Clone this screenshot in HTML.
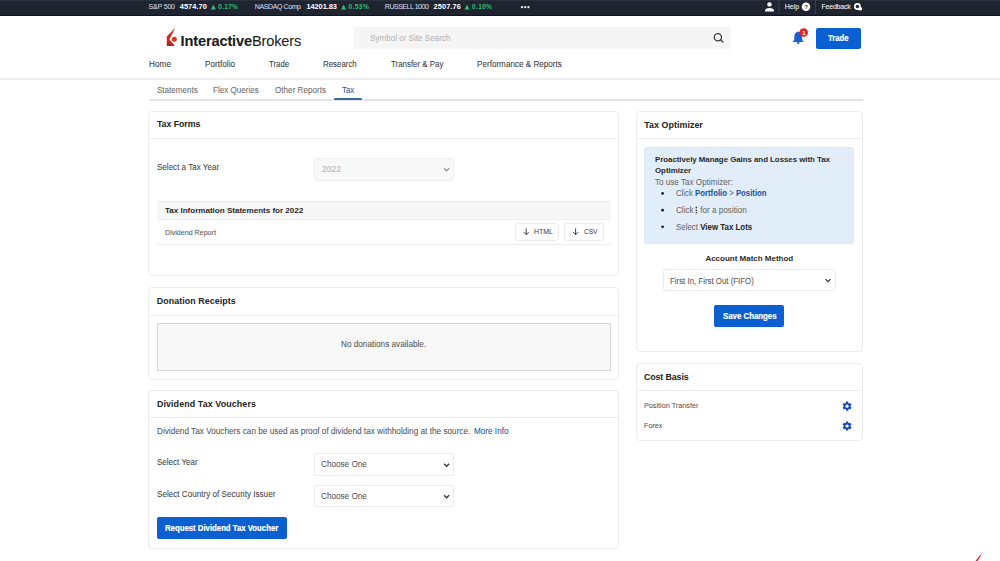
<!DOCTYPE html>
<html><head><meta charset="utf-8">
<style>
html,body{margin:0;padding:0;width:1000px;height:561px;overflow:hidden;background:#fff;position:relative;font-family:"Liberation Sans",sans-serif}
.t{position:absolute;white-space:pre;-webkit-text-stroke:0.06px currentColor}
.b{position:absolute;box-sizing:border-box}
.card{position:absolute;box-sizing:border-box;border:1px solid #ebebeb;border-radius:4px;background:#fff}
.hl{position:absolute;height:1px;background:#ececec}
.sel{position:absolute;box-sizing:border-box;border:1px solid #eaeaea;border-radius:3px;background:#fff}
.btn{position:absolute;box-sizing:border-box;background:#0a60d0;border-radius:2px}
svg{position:absolute;overflow:visible}
</style></head><body>
<!-- top bar -->
<div class="b" style="left:0;top:0;width:1000px;height:16px;background:#1f2431"></div>
<div class="b" style="left:0;top:0;width:1000px;height:1px;background:#2a2f3c"></div>
<div class="b" style="left:0;top:15px;width:1000px;height:1px;background:#10141c"></div>
<svg style="left:0;top:0" width="1000" height="16">
 <g fill="#2fbf71">
  <polygon points="210.8,9.4 213.3,4.4 215.8,9.4"/>
  <polygon points="341.2,9.4 343.6,4.4 346,9.4"/>
  <polygon points="464.6,9.4 467,4.4 469.4,9.4"/>
 </g>
 <g fill="#fff">
  <circle cx="522" cy="7.2" r="1.1"/><circle cx="525.2" cy="7.2" r="1.1"/><circle cx="528.4" cy="7.2" r="1.1"/>
  <circle cx="769.5" cy="4.4" r="2.2"/>
  <path d="M765,11.4 L765,10.6 C765,8.9 766.8,7.9 769.5,7.9 C772.2,7.9 774,8.9 774,10.6 L774,11.4 Z"/>
  <circle cx="806" cy="6.8" r="4.3"/>
  <circle cx="857.4" cy="6.5" r="3.4"/>
  <circle cx="860.2" cy="8.7" r="1.9"/>
 </g>
 <text x="806" y="8.9" font-size="6" font-weight="bold" text-anchor="middle" fill="#1f2431" font-family="Liberation Sans">?</text>
 <circle cx="857.4" cy="6.5" r="1.7" fill="#1f2431"/>
 <rect x="778.3" y="0" width="1" height="14" fill="#3c4052"/>
 <rect x="814.9" y="0" width="1" height="14" fill="#3c4052"/>
</svg>
<!-- header -->
<svg style="left:0;top:0" width="1000" height="80">
 <defs><linearGradient id="lg" x1="0" y1="0" x2="0" y2="1"><stop offset="0" stop-color="#e2301f"/><stop offset="1" stop-color="#b8241c"/></linearGradient></defs>
 <path d="M175.4,27.4 L166.8,36.5 L166.8,46 L175,46 L169.4,39.4 Z" fill="url(#lg)"/>
 <circle cx="174.3" cy="39.3" r="2.5" fill="#e0301f"/>
</svg>
<div class="t" id="logo" style="left:180.6px;top:33.8px;font-size:14.6px;line-height:14.6px;color:#1a1a1a;letter-spacing:-0.15px"><b>Interactive</b>Brokers</div>
<div class="b" style="left:353.8px;top:26.5px;width:377.2px;height:22.3px;background:#f5f5f5;border-radius:1px"></div>
<svg style="left:0;top:0" width="1000" height="80">
 <circle cx="717.9" cy="37.2" r="3.6" fill="none" stroke="#3d3d3d" stroke-width="1.3"/>
 <line x1="720.5" y1="39.8" x2="722.8" y2="42.1" stroke="#3d3d3d" stroke-width="1.4" stroke-linecap="round"/>
 <path d="M798.2,31.8 C795.4,31.8 794.5,34.5 794.3,37.5 L794.1,40.3 L792.5,41.9 L803.9,41.9 L802.3,40.3 L802.1,37.5 C801.9,34.5 801,31.8 798.2,31.8 Z" fill="#1a5fd4"/>
 <ellipse cx="798.2" cy="43" rx="1.3" ry="0.9" fill="#1a5fd4"/>
 <circle cx="803.7" cy="32.5" r="4.3" fill="#e0222a"/>
 <text x="803.8" y="34.7" font-size="6" font-weight="bold" text-anchor="middle" fill="#fff" font-family="Liberation Sans">1</text>
</svg>
<div class="btn" style="left:816px;top:27.75px;width:44.6px;height:20.75px"></div>
<div class="b" style="left:0;top:78px;width:1000px;height:2px;background:#eeeeee"></div>
<!-- subnav -->
<div class="b" style="left:148.5px;top:99.2px;width:714.5px;height:1.4px;background:#e4e4e4"></div>
<div class="b" style="left:333.8px;top:98.3px;width:28.3px;height:1.7px;background:#3d6597;border-radius:1px"></div>
<!-- Tax Forms card -->
<div class="card" style="left:148.2px;top:111px;width:470.8px;height:164.9px"></div>
<div class="hl" style="left:149px;top:138px;width:469.5px"></div>
<div class="b" style="left:313.6px;top:157.7px;width:140.8px;height:23.3px;background:#f8f8f8;border:1px solid #f0f0f0;border-radius:3px"></div>
<svg style="left:0;top:0" width="1000" height="561">
 <polyline points="444.1,168.3 446.6,170.8 449.1,168.3" fill="none" stroke="#8a8a8a" stroke-width="1.2"/>
</svg>
<div class="b" style="left:156.7px;top:200.6px;width:454.3px;height:19.2px;background:#f7f7f7;border-top:1px solid #e8e8e8;border-bottom:1px solid #ededed"></div>
<div class="hl" style="left:156.7px;top:244.2px;width:454.3px;background:#ebebeb"></div>
<div class="sel" style="left:515px;top:223px;width:44px;height:17.5px;border-color:#ebebeb"></div>
<div class="sel" style="left:564px;top:223px;width:39.5px;height:17.5px;border-color:#ebebeb"></div>
<svg style="left:0;top:0" width="1000" height="561">
 <g fill="none" stroke="#444" stroke-width="1" stroke-linecap="round">
  <line x1="526.2" y1="228.8" x2="526.2" y2="234.6"/><polyline points="524,232.4 526.2,234.6 528.4,232.4"/>
  <line x1="575.6" y1="228.8" x2="575.6" y2="234.6"/><polyline points="573.4,232.4 575.6,234.6 577.8,232.4"/>
 </g>
</svg>
<!-- Donation card -->
<div class="card" style="left:148.2px;top:287.1px;width:470.8px;height:92.6px"></div>
<div class="hl" style="left:149px;top:314.8px;width:469.5px"></div>
<div class="b" style="left:157px;top:322.8px;width:454px;height:48.6px;background:#f8f8f8;border:1px solid #d9d9d9"></div>
<!-- Vouchers card -->
<div class="card" style="left:148.2px;top:390px;width:470.8px;height:158.8px"></div>
<div class="hl" style="left:149px;top:416.9px;width:469.5px"></div>
<div class="sel" style="left:313.6px;top:453.2px;width:140.8px;height:22.9px"></div>
<div class="sel" style="left:313.6px;top:484.6px;width:140.8px;height:22.5px"></div>
<svg style="left:0;top:0" width="1000" height="561">
 <g fill="none" stroke="#333" stroke-width="1.3">
  <polyline points="444.1,463.8 446.6,466.3 449.1,463.8"/>
  <polyline points="444.1,495.3 446.6,497.8 449.1,495.3"/>
  </g>
</svg>
<div class="btn" style="left:156.8px;top:516.8px;width:130.4px;height:22.7px"></div>
<!-- Tax Optimizer -->
<div class="card" style="left:636px;top:111px;width:226.5px;height:240.5px"></div>
<div class="hl" style="left:636.5px;top:138px;width:225.5px"></div>
<div class="b" style="left:644.2px;top:147px;width:210.3px;height:97.3px;background:#e1eef9;border:1px solid #d9e8f6;border-radius:3px"></div>
<svg style="left:0;top:0" width="1000" height="561">
 <g fill="#222">
  <circle cx="662.6" cy="193.4" r="1.4"/><circle cx="662.6" cy="210.2" r="1.4"/><circle cx="662.6" cy="226.8" r="1.4"/>
  <circle cx="696.3" cy="207.6" r="0.8"/><circle cx="696.3" cy="210.2" r="0.8"/><circle cx="696.3" cy="212.8" r="0.8"/>
 </g>
</svg>
<div class="sel" style="left:662.6px;top:268.9px;width:173px;height:22.4px"></div>
<svg style="left:0;top:0" width="1000" height="561"><polyline points="825.5,279.1 828,281.6 830.5,279.1" fill="none" stroke="#333" stroke-width="1.3"/></svg>
<div class="btn" style="left:714.3px;top:304.5px;width:69.6px;height:22.4px"></div>
<!-- Cost basis -->
<div class="card" style="left:635.5px;top:362.8px;width:227px;height:78px"></div>
<div class="hl" style="left:636px;top:389.9px;width:226px"></div>
<svg style="left:0;top:0" width="1000" height="561">
 <defs>
  <g id="gear">
   <path d="M-1.75,-3.03 L-1.14,-3.31 L-1.06,-4.58 L1.06,-4.58 L1.14,-3.31 L1.75,-3.03 L2.30,-2.64 L3.44,-3.21 L4.49,-1.37 L3.44,-0.67 L3.50,0.00 L3.44,0.67 L4.49,1.37 L3.44,3.21 L2.30,2.64 L1.75,3.03 L1.14,3.31 L1.06,4.58 L-1.06,4.58 L-1.14,3.31 L-1.75,3.03 L-2.30,2.64 L-3.44,3.21 L-4.49,1.37 L-3.44,0.67 L-3.50,-0.00 L-3.44,-0.67 L-4.49,-1.37 L-3.44,-3.21 L-2.30,-2.64 Z M0,-1.6 A1.6,1.6 0 1,0 0,1.6 A1.6,1.6 0 1,0 0,-1.6 Z" fill="#1a4ab2" fill-rule="evenodd"/>
  </g>
 </defs>
 <use href="#gear" x="847.1" y="406.2"/>
 <use href="#gear" x="847.1" y="426"/>
 <path d="M975.5,561 L980.5,554.5 L981.2,555.2 L977.5,561 Z" fill="#d9262c"/>
</svg>
<div class="t" id="sp" style="left:148.60px;top:3.15px;font-size:7px;line-height:7px;font-weight:400;color:#d5d8e0;letter-spacing:-0.184px;">S&amp;P 500</div>
<div class="t" id="spv" style="left:179.80px;-webkit-text-stroke:0;top:2.81px;font-size:7.4px;line-height:7.4px;font-weight:700;color:#ffffff;letter-spacing:0.042px;">4574.70</div>
<div class="t" id="spc" style="left:218.20px;-webkit-text-stroke:0;top:3.79px;font-size:6.6px;line-height:6.6px;font-weight:700;color:#2fbf71;letter-spacing:0.271px;">0.17%</div>
<div class="t" id="nq" style="left:254.80px;top:3.15px;font-size:7px;line-height:7px;font-weight:400;color:#d5d8e0;letter-spacing:-0.398px;">NASDAQ Comp</div>
<div class="t" id="nqv" style="left:306.40px;-webkit-text-stroke:0;top:2.81px;font-size:7.4px;line-height:7.4px;font-weight:700;color:#ffffff;letter-spacing:-0.038px;">14201.83</div>
<div class="t" id="nqc" style="left:348.40px;-webkit-text-stroke:0;top:3.79px;font-size:6.6px;line-height:6.6px;font-weight:700;color:#2fbf71;letter-spacing:0.421px;">0.53%</div>
<div class="t" id="ru" style="left:384.80px;top:3.15px;font-size:7px;line-height:7px;font-weight:400;color:#d5d8e0;letter-spacing:-0.469px;">RUSSELL 1000</div>
<div class="t" id="ruv" style="left:433.60px;-webkit-text-stroke:0;top:2.81px;font-size:7.4px;line-height:7.4px;font-weight:700;color:#ffffff;letter-spacing:0.075px;">2507.76</div>
<div class="t" id="ruc" style="left:472.00px;-webkit-text-stroke:0;top:3.79px;font-size:6.6px;line-height:6.6px;font-weight:700;color:#2fbf71;letter-spacing:0.321px;">0.10%</div>
<div class="t" id="help" style="left:784.80px;top:3.15px;font-size:7px;line-height:7px;font-weight:400;color:#f2f3f6;letter-spacing:0.001px;">Help</div>
<div class="t" id="fb" style="left:821.40px;top:3.15px;font-size:7px;line-height:7px;font-weight:400;color:#f2f3f6;letter-spacing:-0.192px;">Feedback</div>
<div class="t" id="srch" style="left:370.00px;top:33.73px;font-size:8.91px;line-height:8.91px;font-weight:400;color:#b5b5b5;letter-spacing:0.000px;transform:scaleX(0.9070);transform-origin:0 0;">Symbol or Site Search</div>
<div class="t" id="trade" style="left:827.75px;-webkit-text-stroke:0.2px;top:34.00px;font-size:9.0px;line-height:9.0px;font-weight:700;color:#ffffff;letter-spacing:0.000px;transform:scaleX(0.8537);transform-origin:0 0;">Trade</div>
<div class="t" id="n1" style="left:148.80px;top:59.97px;font-size:8.86px;line-height:8.86px;font-weight:400;color:#3a3a3a;letter-spacing:0.000px;transform:scaleX(0.9309);transform-origin:0 0;">Home</div>
<div class="t" id="n2" style="left:204.90px;top:59.97px;font-size:8.86px;line-height:8.86px;font-weight:400;color:#3a3a3a;letter-spacing:0.000px;transform:scaleX(0.9260);transform-origin:0 0;">Portfolio</div>
<div class="t" id="n3" style="left:269.40px;top:59.97px;font-size:8.86px;line-height:8.86px;font-weight:400;color:#3a3a3a;letter-spacing:0.000px;transform:scaleX(0.8853);transform-origin:0 0;">Trade</div>
<div class="t" id="n4" style="left:323.20px;top:59.97px;font-size:8.86px;line-height:8.86px;font-weight:400;color:#3a3a3a;letter-spacing:0.000px;transform:scaleX(0.8914);transform-origin:0 0;">Research</div>
<div class="t" id="n5" style="left:391.00px;top:59.97px;font-size:8.86px;line-height:8.86px;font-weight:400;color:#3a3a3a;letter-spacing:0.000px;transform:scaleX(0.8935);transform-origin:0 0;">Transfer &amp; Pay</div>
<div class="t" id="n6" style="left:476.80px;top:59.97px;font-size:8.86px;line-height:8.86px;font-weight:400;color:#3a3a3a;letter-spacing:0.000px;transform:scaleX(0.9182);transform-origin:0 0;">Performance &amp; Reports</div>
<div class="t" id="s1" style="left:156.50px;top:85.63px;font-size:8.91px;line-height:8.91px;font-weight:400;color:#6b6b6b;letter-spacing:0.000px;transform:scaleX(0.9031);transform-origin:0 0;">Statements</div>
<div class="t" id="s2" style="left:213.00px;top:85.63px;font-size:8.91px;line-height:8.91px;font-weight:400;color:#6b6b6b;letter-spacing:0.000px;transform:scaleX(0.9068);transform-origin:0 0;">Flex Queries</div>
<div class="t" id="s3" style="left:274.90px;top:85.63px;font-size:8.91px;line-height:8.91px;font-weight:400;color:#6b6b6b;letter-spacing:0.000px;transform:scaleX(0.9132);transform-origin:0 0;">Other Reports</div>
<div class="t" id="s4" style="left:342.10px;top:85.63px;font-size:8.91px;line-height:8.91px;font-weight:400;color:#2a5790;letter-spacing:0.000px;transform:scaleX(0.8798);transform-origin:0 0;">Tax</div>
<div class="t" id="h1" style="left:156.90px;-webkit-text-stroke:0;top:120.44px;font-size:8.9px;line-height:8.9px;font-weight:700;color:#222222;letter-spacing:-0.081px;">Tax Forms</div>
<div class="t" id="l1" style="left:156.80px;top:163.33px;font-size:8.91px;line-height:8.91px;font-weight:400;color:#444444;letter-spacing:0.000px;transform:scaleX(0.9040);transform-origin:0 0;">Select a Tax Year</div>
<div class="t" id="yr" style="left:321.80px;top:165.33px;font-size:8.91px;line-height:8.91px;font-weight:400;color:#b0b0b0;letter-spacing:0.000px;transform:scaleX(0.9585);transform-origin:0 0;">2022</div>
<div class="t" id="th" style="left:165.00px;-webkit-text-stroke:0;top:206.62px;font-size:8.1px;line-height:8.1px;font-weight:700;color:#2a2a2a;letter-spacing:-0.029px;">Tax Information Statements for 2022</div>
<div class="t" id="dr" style="left:165.00px;top:228.67px;font-size:7.92px;line-height:7.92px;font-weight:400;color:#555555;letter-spacing:0.000px;transform:scaleX(0.8980);transform-origin:0 0;">Dividend Report</div>
<div class="t" id="html" style="left:534.00px;top:228.07px;font-size:7.92px;line-height:7.92px;font-weight:400;color:#444444;letter-spacing:0.000px;transform:scaleX(0.8813);transform-origin:0 0;">HTML</div>
<div class="t" id="csv" style="left:584.00px;top:228.07px;font-size:7.92px;line-height:7.92px;font-weight:400;color:#444444;letter-spacing:0.000px;transform:scaleX(0.8290);transform-origin:0 0;">CSV</div>
<div class="t" id="h2" style="left:156.70px;-webkit-text-stroke:0;top:297.03px;font-size:8.9px;line-height:8.9px;font-weight:700;color:#222222;letter-spacing:0.073px;">Donation Receipts</div>
<div class="t" id="nod" style="left:341.40px;top:340.43px;font-size:9.02px;line-height:9.02px;font-weight:400;color:#555555;letter-spacing:0.000px;transform:scaleX(0.9086);transform-origin:0 0;">No donations available.</div>
<div class="t" id="h3" style="left:156.90px;-webkit-text-stroke:0;top:399.83px;font-size:8.9px;line-height:8.9px;font-weight:700;color:#222222;letter-spacing:0.110px;">Dividend Tax Vouchers</div>
<div class="t" id="desc" style="left:157.00px;top:427.03px;font-size:9.02px;line-height:9.02px;font-weight:400;color:#555555;letter-spacing:0.000px;transform:scaleX(0.9118);transform-origin:0 0;">Dividend Tax Vouchers can be used as proof of dividend tax withholding at the source.</div>
<div class="t" id="more" style="left:474.00px;top:427.03px;font-size:9.02px;line-height:9.02px;font-weight:400;color:#1d55a8;letter-spacing:0.000px;transform:scaleX(0.9055);transform-origin:0 0;">More Info</div>
<div class="t" id="l2" style="left:156.80px;top:458.33px;font-size:8.91px;line-height:8.91px;font-weight:400;color:#444444;letter-spacing:0.000px;transform:scaleX(0.9028);transform-origin:0 0;">Select Year</div>
<div class="t" id="co1" style="left:321.30px;top:460.33px;font-size:8.91px;line-height:8.91px;font-weight:400;color:#555555;letter-spacing:0.000px;transform:scaleX(0.9175);transform-origin:0 0;">Choose One</div>
<div class="t" id="l3" style="left:156.80px;top:489.53px;font-size:8.91px;line-height:8.91px;font-weight:400;color:#444444;letter-spacing:0.000px;transform:scaleX(0.9126);transform-origin:0 0;">Select Country of Security Issuer</div>
<div class="t" id="co2" style="left:321.30px;top:491.63px;font-size:8.91px;line-height:8.91px;font-weight:400;color:#555555;letter-spacing:0.000px;transform:scaleX(0.9175);transform-origin:0 0;">Choose One</div>
<div class="t" id="rq" style="left:165.30px;-webkit-text-stroke:0.2px;top:524.36px;font-size:8.4px;line-height:8.4px;font-weight:700;color:#ffffff;letter-spacing:0.000px;transform:scaleX(0.9277);transform-origin:0 0;">Request Dividend Tax Voucher</div>
<div class="t" id="h4" style="left:644.20px;-webkit-text-stroke:0;top:120.63px;font-size:8.9px;line-height:8.9px;font-weight:700;color:#222222;letter-spacing:0.051px;">Tax Optimizer</div>
<div class="t" id="p1" style="left:655.00px;-webkit-text-stroke:0;top:155.78px;font-size:7.9px;line-height:7.9px;font-weight:700;color:#2a2a2a;letter-spacing:-0.039px;">Proactively Manage Gains and Losses with Tax</div>
<div class="t" id="p2" style="left:655.00px;-webkit-text-stroke:0;top:166.59px;font-size:7.9px;line-height:7.9px;font-weight:700;color:#2a2a2a;letter-spacing:-0.029px;">Optimizer</div>
<div class="t" id="p3" style="left:655.00px;top:177.52px;font-size:8.8px;line-height:8.8px;font-weight:400;color:#6a6a6a;letter-spacing:0.000px;transform:scaleX(0.9213);transform-origin:0 0;">To use Tax Optimizer:</div>
<div class="t" id="b1" style="left:675.80px;top:189.02px;font-size:8.8px;line-height:8.8px;font-weight:400;color:#6a6a6a;letter-spacing:0.000px;transform:scaleX(0.8846);transform-origin:0 0;">Click <b style='color:#1d55a8'>Portfolio</b> &gt; <b style='color:#1d55a8'>Position</b></div>
<div class="t" id="b2" style="left:675.80px;top:205.82px;font-size:8.8px;line-height:8.8px;font-weight:400;color:#6a6a6a;letter-spacing:0.000px;transform:scaleX(0.9220);transform-origin:0 0;">Click &nbsp; for a position</div>
<div class="t" id="b3" style="left:675.80px;top:222.62px;font-size:8.8px;line-height:8.8px;font-weight:400;color:#6a6a6a;letter-spacing:0.000px;transform:scaleX(0.8989);transform-origin:0 0;">Select <b style='color:#2a2a2a'>View Tax Lots</b></div>
<div class="t" id="amm" style="left:705.40px;-webkit-text-stroke:0;top:255.40px;font-size:8px;line-height:8px;font-weight:700;color:#2a2a2a;letter-spacing:-0.010px;">Account Match Method</div>
<div class="t" id="fifo" style="left:670.20px;top:276.61px;font-size:8.69px;line-height:8.69px;font-weight:400;color:#555555;letter-spacing:0.000px;transform:scaleX(0.9063);transform-origin:0 0;">First In, First Out (FIFO)</div>
<div class="t" id="save" style="left:722.50px;-webkit-text-stroke:0.2px;top:312.12px;font-size:8.8px;line-height:8.8px;font-weight:700;color:#ffffff;letter-spacing:0.000px;transform:scaleX(0.8909);transform-origin:0 0;">Save Changes</div>
<div class="t" id="h5" style="left:643.90px;-webkit-text-stroke:0;top:372.74px;font-size:8.9px;line-height:8.9px;font-weight:700;color:#222222;letter-spacing:-0.122px;">Cost Basis</div>
<div class="t" id="pt" style="left:643.90px;top:401.97px;font-size:7.92px;line-height:7.92px;font-weight:400;color:#555555;letter-spacing:0.000px;transform:scaleX(0.9171);transform-origin:0 0;">Position Transfer</div>
<div class="t" id="fx" style="left:643.90px;top:421.87px;font-size:7.92px;line-height:7.92px;font-weight:400;color:#555555;letter-spacing:0.000px;transform:scaleX(0.9138);transform-origin:0 0;">Forex</div>
</body></html>
